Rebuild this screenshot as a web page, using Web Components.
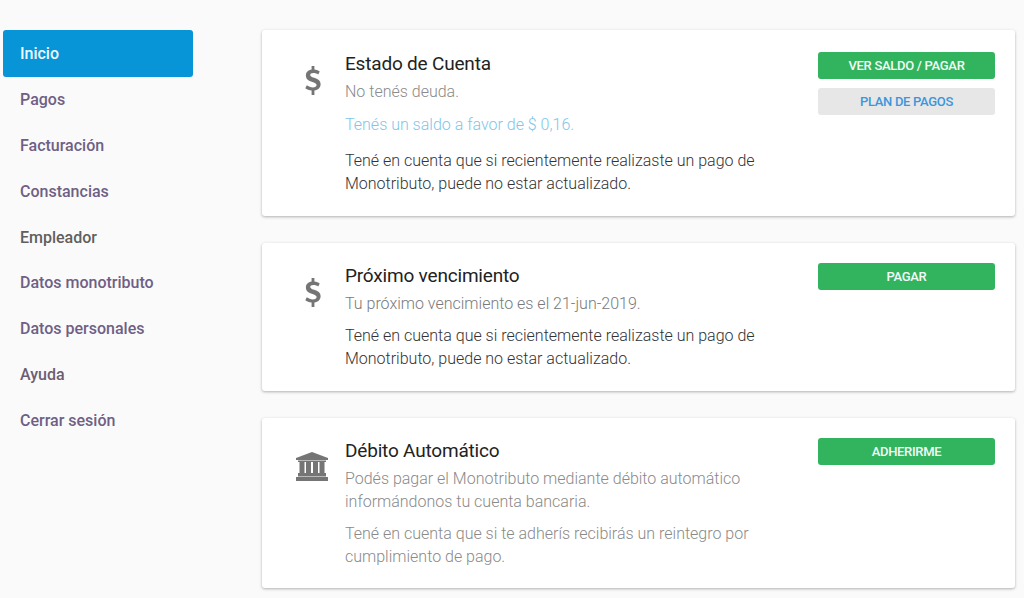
<!DOCTYPE html>
<html lang="es">
<head>
<meta charset="utf-8">
<title>Monotributo</title>
<style>
  html, body { margin: 0; height: 100%; overflow: hidden; }
  body { background: #fafafa; font-family: Roboto, "Liberation Sans", sans-serif; }
  .page { display: flex; align-items: flex-start; padding: 30px 9px 0 3px; }
  .cards { flex: 1; display: flex; flex-direction: column; gap: 27px; margin-left: 69px; }
  .note { color: #333; }
  .muted { color: #8a8a8a; }
  .info { color: #7fc6e9; }
</style>
</head>
<body>
<template id="side-nav-tmpl">
  <style>
    :host { display: flex; flex-direction: column; width: 190px; flex: none; }
  </style>
  <slot></slot>
</template>

<template id="nav-item-tmpl">
  <style>
    :host { display: block; }
    a {
      display: flex; align-items: center; height: 45.75px; padding-left: 17px;
      font-size: 16px; font-weight: 500; color: var(--item-color, #6f5f85);
      text-decoration: none; border-radius: 3px; box-sizing: border-box;
    }
    :host([active]) a { background: #0795d8; color: #eef8fd; height: 47px; }
  </style>
  <a href="#"><slot></slot></a>
</template>

<template id="info-card-tmpl">
  <style>
    :host {
      display: grid; grid-template-columns: 83px 1fr 177px; column-gap: 0;
      background: #fff; border-radius: 3px; padding: 21px 20px 20.5px 0;
      box-shadow: 0 1px 3px rgba(0,0,0,.3);
    }
    /* first card sits a pixel lower inside its box */
    :host([roomy]) { padding-top: 22px; padding-bottom: 21px; }
    .icon { display: flex; justify-content: center; padding-top: 13.5px; padding-left: 19px; box-sizing: border-box; }
    .icon ::slotted(svg) { fill: #757575; display: block; }
    .title { font-size: 19px; letter-spacing: -.19px; line-height: 24px; color: #222; margin-bottom: 4px; }
    .body { font-size: 16px; font-weight: 300; line-height: 23px; width: 440px; }
    .actions { display: flex; flex-direction: column; gap: 9px; margin-top: -.7px; }
    :host([roomy]) .actions { margin-top: .3px; }
  </style>
  <div class="icon"><slot name="icon"></slot></div>
  <div>
    <div class="title"><slot name="title"></slot></div>
    <div class="body"><slot></slot></div>
  </div>
  <div class="actions"><slot name="actions"></slot></div>
</template>

<template id="card-text-tmpl">
  <style>
    :host { display: block; margin-top: var(--gap, 9px); }
  </style>
  <slot></slot>
</template>

<template id="action-button-tmpl">
  <style>
    :host { display: block; }
    button {
      display: block; width: 100%; height: 26.7px; border: 0; border-radius: 3px; padding: 0;
      font: 500 13px Roboto, "Liberation Sans", sans-serif; letter-spacing: -.3px; text-transform: uppercase;
      background: #32b45f; color: #f2fbf5;
    }
    :host([variant="grey"]) button { background: #e7e7e7; color: #3c96dc; }
  </style>
  <button type="button"><slot></slot></button>
</template>

<div class="page">
  <side-nav>
    <nav-item active>Inicio</nav-item>
    <nav-item>Pagos</nav-item>
    <nav-item>Facturación</nav-item>
    <nav-item>Constancias</nav-item>
    <nav-item style="--item-color:#5f5f5f">Empleador</nav-item>
    <nav-item>Datos monotributo</nav-item>
    <nav-item>Datos personales</nav-item>
    <nav-item style="--item-color:#6a5f72">Ayuda</nav-item>
    <nav-item>Cerrar sesión</nav-item>
  </side-nav>

  <div class="cards">
    <info-card roomy>
      <svg slot="icon" width="16" height="30" viewBox="0 0 16 30"><path d="M6.600 0h2.800v3.600c2.100.2 4 .9 5.300 1.800l-1.400 3C12 7.600 10.200 7 8.300 7 6.300 7 5.200 7.800 5.200 9c0 1.300 1.300 1.900 3.900 2.800 4 1.300 6.500 2.800 6.500 6.500 0 3.400-2.400 5.700-6.200 6.200V29H6.600v-4.400c-2.500-.2-4.800-1.100-6.300-2.300l1.500-3c1.700 1.200 3.900 2.100 6.100 2.100 2.300 0 3.700-.9 3.700-2.400 0-1.400-1.200-2.100-4.100-3.100C3.700 14.700.9 13.300.9 9.400.9 6.200 3.200 4.100 6.600 3.600z"/></svg>
      <span slot="title">Estado de Cuenta</span>
      <card-text class="muted" style="--gap:0">No tenés deuda.</card-text>
      <card-text class="info" style="--gap:10px">Tenés un saldo a favor de $ 0,16.</card-text>
      <card-text class="note" style="--gap:13px">Tené en cuenta que si recientemente realizaste un pago de Monotributo, puede no estar actualizado.</card-text>
      <action-button slot="actions">Ver saldo / pagar</action-button>
      <action-button slot="actions" variant="grey">Plan de pagos</action-button>
    </info-card>

    <info-card>
      <svg slot="icon" width="16" height="30" viewBox="0 0 16 30"><path d="M6.600 0h2.800v3.600c2.100.2 4 .9 5.300 1.800l-1.400 3C12 7.600 10.200 7 8.300 7 6.300 7 5.200 7.800 5.200 9c0 1.300 1.300 1.900 3.900 2.800 4 1.300 6.500 2.800 6.500 6.500 0 3.400-2.400 5.700-6.200 6.200V29H6.600v-4.400c-2.500-.2-4.800-1.100-6.300-2.300l1.500-3c1.700 1.200 3.900 2.100 6.100 2.100 2.300 0 3.700-.9 3.700-2.400 0-1.400-1.200-2.100-4.100-3.100C3.700 14.700.9 13.300.9 9.400.9 6.200 3.200 4.100 6.600 3.600z"/></svg>
      <span slot="title">Próximo vencimiento</span>
      <card-text class="muted" style="--gap:0;color:#7a7a7a">Tu próximo vencimiento es el 21-jun-2019.</card-text>
      <card-text class="note">Tené en cuenta que si recientemente realizaste un pago de Monotributo, puede no estar actualizado.</card-text>
      <action-button slot="actions">Pagar</action-button>
    </info-card>

    <info-card>
      <svg slot="icon" width="32" height="29" viewBox="0 0 32 29" style="margin-left:-2px"><path d="M16 0 32 6V8H0V6zM2 8.500h28V10H2zM3.500 10h5v11h-5zM10 10h5v11h-5zM17 10h5v11h-5zM23.500 10h5v11h-5zM2 21h28v3.500H2zM0 25h32v4H0z"/></svg>
      <span slot="title">Débito Automático</span>
      <card-text class="muted" style="--gap:0">Podés pagar el Monotributo mediante débito automático informándonos tu cuenta bancaria.</card-text>
      <card-text class="muted">Tené en cuenta que si te adherís recibirás un reintegro por cumplimiento de pago.</card-text>
      <action-button slot="actions">Adherirme</action-button>
    </info-card>
  </div>
</div>

<script>
  // every element just clones its template into an open shadow root
  function register(tag, tmplId) {
    const tmpl = document.getElementById(tmplId);
    customElements.define(tag, class extends HTMLElement {
      constructor() {
        super();
        this.attachShadow({ mode: 'open' }).appendChild(tmpl.content.cloneNode(true));
      }
    });
  }

  register('side-nav', 'side-nav-tmpl');
  register('nav-item', 'nav-item-tmpl');
  register('info-card', 'info-card-tmpl');
  register('card-text', 'card-text-tmpl');
  register('action-button', 'action-button-tmpl');
</script>
</body>
</html>
